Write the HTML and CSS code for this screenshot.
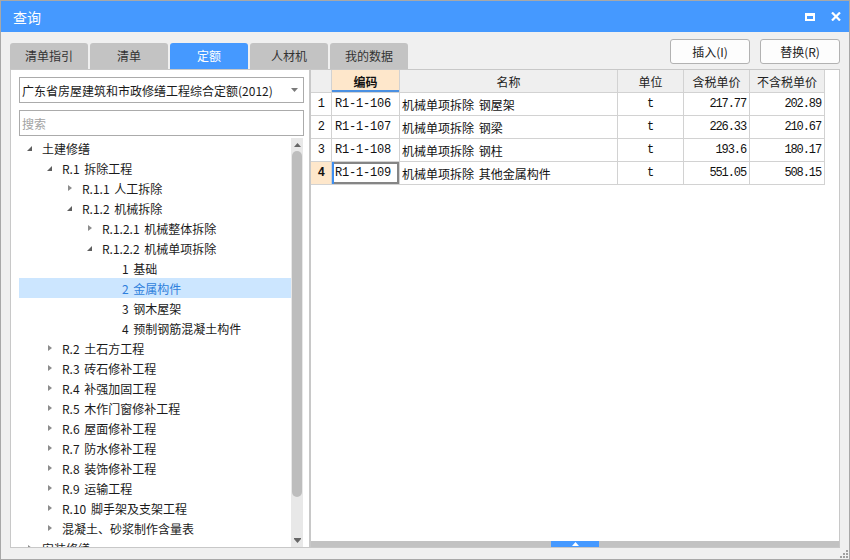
FILE: index.html
```html
<!DOCTYPE html>
<html lang="zh-CN">
<head>
<meta charset="utf-8">
<title>查询</title>
<link rel="stylesheet" href="styles.css">
</head>
<body>
<div class="window">
  <div class="titlebar">
    <span class="title">查询</span>
    <div class="win-btns">
      <span class="ic-max"></span>
      <svg class="ic-close" width="10" height="9" viewBox="0 0 10 9"><path d="M1 0.5 L9 8.5 M9 0.5 L1 8.5" stroke="#fff" stroke-width="2.2" fill="none"/></svg>
    </div>
  </div>

  <div class="topbar">
    <div class="tabs">
      <div class="tab">清单指引</div>
      <div class="tab">清单</div>
      <div class="tab active">定额</div>
      <div class="tab">人材机</div>
      <div class="tab">我的数据</div>
    </div>
    <div class="actions">
      <button class="btn">插入(I)</button>
      <button class="btn">替换(R)</button>
    </div>
  </div>

  <div class="main">
    <div class="left">
      <div class="combo">
        <span class="combo-text">广东省房屋建筑和市政修缮工程综合定额(2012)</span>
        <svg class="combo-arrow" width="7" height="4" viewBox="0 0 7 4"><path d="M0 0 H7 L3.5 4 Z" fill="#7a7a7a"/></svg>
      </div>
      <div class="search"><span class="placeholder">搜索</span></div>
      <div class="tree-wrap">
        <div class="tree">
          <div class="row l0"><span class="arr exp"></span><span class="txt">土建修缮</span></div>
          <div class="row l1"><span class="arr exp"></span><span class="txt">R.1 拆除工程</span></div>
          <div class="row l2"><span class="arr col"></span><span class="txt">R.1.1 人工拆除</span></div>
          <div class="row l2"><span class="arr exp"></span><span class="txt">R.1.2 机械拆除</span></div>
          <div class="row l3"><span class="arr col"></span><span class="txt">R.1.2.1 机械整体拆除</span></div>
          <div class="row l3"><span class="arr exp"></span><span class="txt">R.1.2.2 机械单项拆除</span></div>
          <div class="row l4"><span class="arr"></span><span class="txt">1 基础</span></div>
          <div class="row l4 sel"><span class="arr"></span><span class="txt">2 金属构件</span></div>
          <div class="row l4"><span class="arr"></span><span class="txt">3 钢木屋架</span></div>
          <div class="row l4"><span class="arr"></span><span class="txt">4 预制钢筋混凝土构件</span></div>
          <div class="row l1"><span class="arr col"></span><span class="txt">R.2 土石方工程</span></div>
          <div class="row l1"><span class="arr col"></span><span class="txt">R.3 砖石修补工程</span></div>
          <div class="row l1"><span class="arr col"></span><span class="txt">R.4 补强加固工程</span></div>
          <div class="row l1"><span class="arr col"></span><span class="txt">R.5 木作门窗修补工程</span></div>
          <div class="row l1"><span class="arr col"></span><span class="txt">R.6 屋面修补工程</span></div>
          <div class="row l1"><span class="arr col"></span><span class="txt">R.7 防水修补工程</span></div>
          <div class="row l1"><span class="arr col"></span><span class="txt">R.8 装饰修补工程</span></div>
          <div class="row l1"><span class="arr col"></span><span class="txt">R.9 运输工程</span></div>
          <div class="row l1"><span class="arr col"></span><span class="txt">R.10 脚手架及支架工程</span></div>
          <div class="row l1"><span class="arr col"></span><span class="txt">混凝土、砂浆制作含量表</span></div>
          <div class="row l0"><span class="arr col"></span><span class="txt">安装修缮</span></div>
        </div>
        <div class="vscroll">
          <div class="sb-btn"><svg width="7" height="4" viewBox="0 0 7 4"><path d="M0 4 H7 L3.5 0 Z" fill="#666"/></svg></div>
          <div class="sb-track"><div class="sb-thumb"></div></div>
          <div class="sb-btn"><svg width="7" height="5" viewBox="0 0 7 5"><path d="M0 0 H7 V1 H0 Z M0 1 H7 L3.5 5 Z" fill="#666"/></svg></div>
        </div>
      </div>
    </div>

    <div class="right">
      <div class="grid">
        <div class="hc corner"></div>
        <div class="hc curcol">编码</div>
        <div class="hc">名称</div>
        <div class="hc">单位</div>
        <div class="hc">含税单价</div>
        <div class="hc">不含税单价</div>

        <div class="c rn">1</div>
        <div class="c code">R1-1-106</div>
        <div class="c name">机械单项拆除 钢屋架</div>
        <div class="c unit">t</div>
        <div class="c num">217.77</div>
        <div class="c num">202.89</div>

        <div class="c rn">2</div>
        <div class="c code">R1-1-107</div>
        <div class="c name">机械单项拆除 钢梁</div>
        <div class="c unit">t</div>
        <div class="c num">226.33</div>
        <div class="c num">210.67</div>

        <div class="c rn">3</div>
        <div class="c code">R1-1-108</div>
        <div class="c name">机械单项拆除 钢柱</div>
        <div class="c unit">t</div>
        <div class="c num">193.6</div>
        <div class="c num">180.17</div>

        <div class="c rn currow">4</div>
        <div class="c code cur">R1-1-109</div>
        <div class="c name">机械单项拆除 其他金属构件</div>
        <div class="c unit">t</div>
        <div class="c num">551.05</div>
        <div class="c num">508.15</div>
      </div>
      <div class="hsplit">
        <div class="handle"><svg width="7" height="4" viewBox="0 0 7 4"><path d="M0 4 H7 L3.5 0 Z" fill="#fff"/></svg></div>
      </div>
    </div>
  </div>

  <div class="statusbar">
    <svg class="grip" width="8" height="8" viewBox="0 0 8 8">
      <rect x="6" y="0" width="2" height="2" fill="#a0a0a0"/>
      <rect x="3" y="3" width="2" height="2" fill="#a0a0a0"/>
      <rect x="6" y="3" width="2" height="2" fill="#a0a0a0"/>
      <rect x="0" y="6" width="2" height="2" fill="#a0a0a0"/>
      <rect x="3" y="6" width="2" height="2" fill="#a0a0a0"/>
      <rect x="6" y="6" width="2" height="2" fill="#a0a0a0"/>
    </svg>
  </div>
</div>
</body>
</html>
```

FILE: styles.css
```css
* { box-sizing: border-box; }

body {
  margin: 0;
  background: #f0f0f0;
}

.window {
  width: 850px;
  height: 560px;
  border: 1px solid #a8a8a8;
  background: #f0f0f0;
  display: flex;
  flex-direction: column;
  overflow: hidden;
  font-family: "Noto Sans CJK SC", "Noto Sans", sans-serif;
  font-size: 12px;
  color: #1a1a1a;
}

/* title bar */
.titlebar {
  height: 31px;
  flex: none;
  background: #4599ff;
  display: flex;
  align-items: center;
  padding-left: 12px;
  color: #fff;
}
.title {
  font-size: 14px;
  line-height: 1;
}
.win-btns {
  margin-left: auto;
  margin-right: 8px;
  display: flex;
  align-items: center;
  gap: 16px;
}
.ic-max {
  display: block;
  width: 10px;
  height: 8px;
  border: 2px solid #fff;
  border-top-width: 3px;
}
.ic-close { display: block; }

/* tabs and buttons */
.topbar {
  height: 37px;
  flex: none;
  display: flex;
  padding: 0 9px;
}
.tabs {
  display: flex;
  gap: 2px;
  align-self: flex-end;
}
.tab {
  width: 78px;
  height: 26px;
  background: #c3c3c3;
  border-radius: 3px 3px 0 0;
  display: flex;
  align-items: center;
  justify-content: center;
  color: #333;
  font-size: 12px;
  padding-bottom: 1px;
}
.tab.active {
  background: #4599ff;
  color: #fff;
}
.actions {
  margin-left: auto;
  display: flex;
  gap: 10px;
  padding-top: 7px;
  align-self: flex-start;
}
.btn {
  width: 80px;
  height: 25px;
  background: #fdfdfd;
  border: 1px solid #b2b2b2;
  border-radius: 3px;
  font-family: inherit;
  font-size: 12px;
  color: #222;
  padding: 0;
}

/* main area */
.main {
  height: 479px;
  flex: none;
  display: flex;
  padding: 0 9px;
}
.left {
  width: 300px;
  flex: none;
  border: 1px solid #c8c8c8;
  background: #fff;
  display: flex;
  flex-direction: column;
}
.combo,
.search {
  height: 26px;
  flex: none;
  margin: 7px 5px 0 8px;
  border: 1px solid #ababab;
  display: flex;
  align-items: center;
  padding-left: 2px;
  background: #fff;
}
.combo-text {
  font-size: 12px;
  color: #1a1a1a;
  white-space: nowrap;
}
.combo-arrow {
  margin-left: auto;
  margin-right: 5px;
}
.placeholder {
  color: #a3a3a3;
  font-size: 12px;
}

.tree-wrap {
  flex: 1;
  min-height: 0;
  margin: 2px 6px 0 8px;
  display: flex;
}
.tree {
  width: 272px;
  flex: none;
  overflow: hidden;
}
.row {
  height: 20px;
  display: flex;
  align-items: center;
  white-space: nowrap;
  color: #1a1a1a;
  word-spacing: 2px;
}
.row.l0 { padding-left: 8px; }
.row.l1 { padding-left: 28px; }
.row.l2 { padding-left: 48px; }
.row.l3 { padding-left: 68px; }
.row.l4 { padding-left: 88px; }
.row.sel {
  background: #cce6ff;
  color: #2f7fdc;
}
.arr {
  width: 6px;
  height: 7px;
  flex: none;
  margin-right: 9px;
  position: relative;
}
.arr.exp::before {
  content: "";
  position: absolute;
  left: 0;
  top: 1px;
  border-style: solid;
  border-width: 0 0 5px 5px;
  border-color: transparent transparent #5f5f5f transparent;
}
.arr.col::before {
  content: "";
  position: absolute;
  left: 1px;
  top: 0;
  border-style: solid;
  border-width: 3.5px 0 3.5px 4px;
  border-color: transparent transparent transparent #8c8c8c;
}

.vscroll {
  width: 12px;
  flex: none;
  background: #e8e8e8;
  display: flex;
  flex-direction: column;
}
.sb-btn {
  height: 13px;
  flex: none;
  display: flex;
  align-items: center;
  justify-content: center;
}
.sb-btn svg { display: block; }
.sb-track {
  flex: 1;
  display: flex;
  justify-content: center;
}
.sb-thumb {
  width: 10px;
  height: 346px;
  background: #bdbdbd;
  border-radius: 5px;
}

/* right panel */
.right {
  flex: 1;
  border: 1px solid #c8c8c8;
  background: #fff;
  display: flex;
  flex-direction: column;
}
.grid {
  flex: 1;
  display: grid;
  grid-template-columns: 21px 68px 218px 66px 66px 75px;
  grid-auto-rows: 23px;
  align-content: start;
  justify-content: start;
}
.hc,
.c {
  border-right: 1px solid #d2d2d2;
  border-bottom: 1px solid #d2d2d2;
  display: flex;
  align-items: center;
  white-space: nowrap;
  overflow: hidden;
}
.hc {
  background: #efefef;
  justify-content: center;
  font-size: 12px;
  color: #222;
}
.hc.curcol {
  background: #fee7cb;
  font-weight: bold;
  color: #111;
  box-shadow: inset 0 -2px 0 #4a90e2;
}
.c {
  background: #fff;
  color: #111;
}
.rn {
  justify-content: center;
  font-family: "Liberation Mono", monospace;
  font-size: 12px;
  letter-spacing: -0.5px;
}
.rn.currow {
  background: #fee7cb;
  font-weight: bold;
}
.code {
  padding-left: 3px;
  font-family: "Liberation Mono", monospace;
  font-size: 12px;
  letter-spacing: -0.2px;
}
.code.cur {
  box-shadow: inset 2px 0 0 #3d8ef0, inset 0 0 0 2px #858585;
}
.name {
  padding-left: 2px;
  font-size: 12px;
  word-spacing: 2px;
}
.unit {
  justify-content: center;
  font-family: "Liberation Mono", monospace;
  font-size: 12px;
}
.num {
  justify-content: flex-end;
  padding-right: 3px;
  font-family: "Liberation Mono", monospace;
  font-size: 12px;
  letter-spacing: -1.1px;
}

.hsplit {
  height: 6px;
  flex: none;
  background: #c2c2c2;
  display: flex;
  justify-content: center;
}
.handle {
  width: 48px;
  height: 6px;
  background: #4599ff;
  display: flex;
  align-items: center;
  justify-content: center;
}
.handle svg { display: block; }

.statusbar {
  height: 11px;
  flex: none;
  display: flex;
  justify-content: flex-end;
  align-items: flex-end;
  padding: 0 1px 1px 0;
}
.grip { display: block; }
```
